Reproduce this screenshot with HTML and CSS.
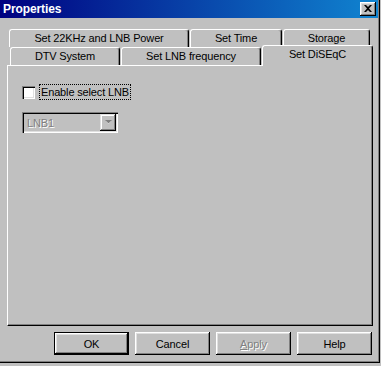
FILE: index.html
```html
<!DOCTYPE html>
<html lang="en">
<head>
    <meta charset="UTF-8" />
    <title>Properties</title>
    <link rel="stylesheet" href="styles.css">
</head>
<body>
    <div class="window">
        <div class="titlebar">
            <span class="title">Properties</span>
            <button class="close" aria-label="Close">
                <svg width="8" height="7" viewBox="0 0 8 7">
                    <path d="M0 0h2l2 2 2-2h2L5 3.5 8 7H6L4 5 2 7H0l3-3.5z" fill="#000"/>
                </svg>
            </button>
        </div>

        <div class="dialog">
            <div class="tabs">
                <div class="tab-row back">
                    <div class="tab" style="width:180px">Set 22KHz and LNB Power</div>
                    <div class="tab" style="width:92px">Set Time</div>
                    <div class="tab" style="width:87px">Storage</div>
                </div>
                <div class="tab-row front">
                    <div class="tab" style="width:110px">DTV System</div>
                    <div class="tab" style="width:140px">Set LNB frequency</div>
                    <div class="tab active" style="width:111px">Set DiSEqC</div>
                </div>
            </div>

            <div class="panel">
                <label class="check">
                    <span class="box"></span>
                    <span class="focus">Enable select LNB</span>
                </label>
                <div class="combo">
                    <span class="value">LNB1</span>
                    <span class="drop">
                        <svg width="7" height="5" viewBox="0 0 7 5">
                            <path d="M1 1h5L3.5 4z" fill="#fff"/>
                            <path d="M0 0h7L3.5 3.5z" fill="#808080"/>
                        </svg>
                    </span>
                </div>
            </div>

            <div class="buttons">
                <button class="btn default">OK</button>
                <button class="btn">Cancel</button>
                <button class="btn" disabled><u>A</u>pply</button>
                <button class="btn">Help</button>
            </div>
        </div>
    </div>
</body>
</html>
```

FILE: styles.css
```css
/* Reset */
* {
    margin: 0;
    padding: 0;
    box-sizing: border-box;
}

body {
    background-color: #c0c0c0;
    font-family: 'Liberation Sans', Arial, sans-serif;
    font-size: 11px;
    letter-spacing: -0.15px;
    color: #000;
}

/* Window frame */
.window {
    width: 380px;
    height: 363px;
    background-color: #c0c0c0;
    box-shadow: inset -1px -1px #000, inset -2px -2px #808080;
}

.titlebar {
    height: 18px;
    margin-right: 2px;
    background: linear-gradient(to right, #000080, #1084d0);
    display: flex;
    align-items: center;
    justify-content: space-between;
    padding: 0 2px 0 3px;
}

.title {
    color: #fff;
    font-weight: 700;
    font-size: 12px;
    letter-spacing: -0.1px;
}

.close {
    width: 16px;
    height: 14px;
    background-color: #c0c0c0;
    border: none;
    box-shadow: inset -1px -1px #000, inset 1px 1px #fff, inset -2px -2px #808080, inset 2px 2px #dfdfdf;
    display: flex;
    align-items: center;
    justify-content: center;
    padding-bottom: 1px;
}

/* Dialog body */
.dialog {
    padding: 11px 0 0 7px;
}

/* Tabs */
.tab-row {
    display: flex;
    gap: 1px;
    height: 18px;
}

.tab-row.back {
    margin-left: 2px;
}

.tab-row.front {
    margin-left: 3px;
}

.tab {
    height: 18px;
    border: 1px solid #fff;
    border-bottom: none;
    border-right-color: #000;
    border-radius: 3px 3px 0 0;
    box-shadow: inset -1px 0 #808080;
    text-align: center;
    line-height: 16px;
    white-space: nowrap;
}

.tab.active {
    position: relative;
    z-index: 1;
    height: 21px;
    margin-top: -2px;
    background-color: #c0c0c0;
    line-height: 17px;
}

/* Page panel */
.panel {
    width: 366px;
    height: 261px;
    border: 1px solid #fff;
    border-right-color: #000;
    border-bottom-color: #000;
    box-shadow: inset -1px -1px #808080;
    padding: 18px 0 0 14px;
    display: flex;
    flex-direction: column;
    align-items: flex-start;
    gap: 12px;
}

.check {
    display: flex;
    align-items: center;
    gap: 4px;
    height: 16px;
}

.check .box {
    width: 13px;
    height: 13px;
    background-color: #fff;
    box-shadow: inset 1px 1px #808080, inset 2px 2px #000, inset -1px -1px #fff, inset -2px -2px #dfdfdf;
}

.check .focus {
    border: 1px dotted #000;
    padding: 0 1px;
    line-height: 14px;
}

.combo {
    width: 96px;
    height: 21px;
    box-shadow: inset 1px 1px #808080, inset 2px 2px #000, inset -1px -1px #fff, inset -2px -2px #dfdfdf;
    display: flex;
    align-items: center;
    justify-content: space-between;
    padding: 2px;
}

.combo .value {
    padding-left: 3px;
    color: #808080;
    text-shadow: 1px 1px #fff;
}

.combo .drop {
    width: 16px;
    height: 17px;
    box-shadow: inset -1px -1px #000, inset 1px 1px #dfdfdf, inset -2px -2px #808080, inset 2px 2px #fff;
    display: flex;
    align-items: center;
    justify-content: center;
}

/* Bottom buttons */
.buttons {
    display: flex;
    justify-content: flex-end;
    gap: 6px;
    margin: 6px 8px 0 0;
}

.btn {
    width: 75px;
    height: 23px;
    background-color: #c0c0c0;
    border: none;
    font-family: inherit;
    font-size: inherit;
    letter-spacing: inherit;
    color: #000;
    box-shadow: inset -1px -1px #000, inset 1px 1px #fff, inset -2px -2px #808080, inset 2px 2px #dfdfdf;
}

.btn.default {
    box-shadow: inset 0 0 0 1px #000, inset -2px -2px #000, inset 2px 2px #fff, inset -3px -3px #808080, inset 3px 3px #dfdfdf;
}

.btn:disabled {
    color: #808080;
    text-shadow: 1px 1px #fff;
}
```
